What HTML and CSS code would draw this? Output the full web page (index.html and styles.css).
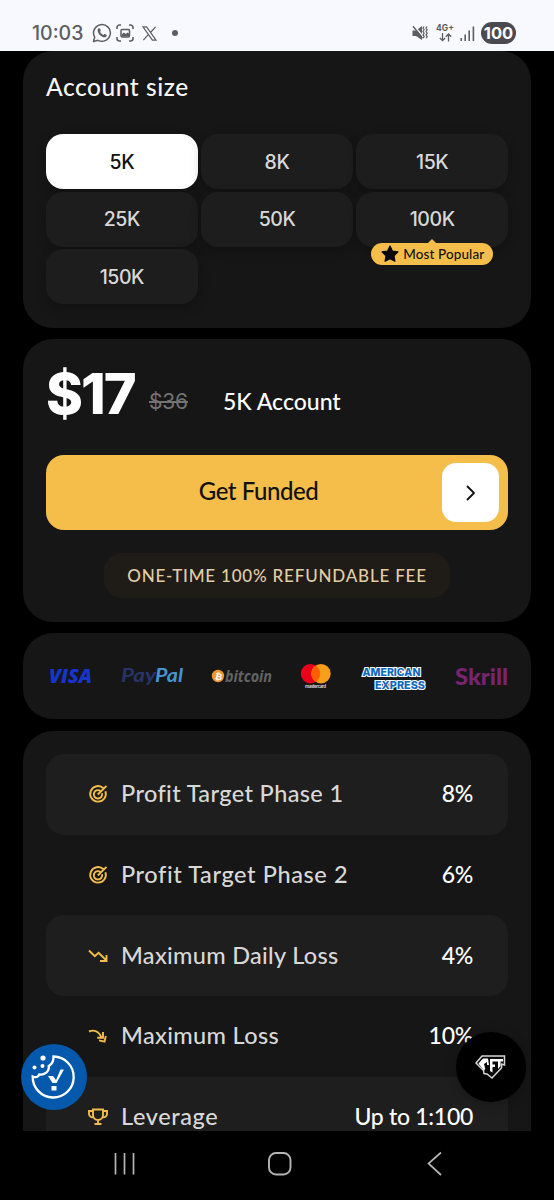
FILE: index.html
```
<!DOCTYPE html>
<html lang="en">
<head>
<meta charset="utf-8">
<title>Account size</title>
<link rel="stylesheet" href="styles.css">
</head>
<body>
<div class="screen">
  <header class="status">
    <div class="status-left">
      <span class="clock">10:03</span>
      <svg class="whatsapp" width="20" height="20" viewBox="0 0 20 20"><path d="M1.500 18.500l1.200-4.400A8.400 8.400 0 1 1 6 17.300z" fill="none" stroke="#5d5d63" stroke-width="1.500" stroke-linejoin="round"/><path d="M6.300 5.600c.7-.7 1.400-.6 1.800.2l.7 1.600c.1.4-.6 1.100-.8 1.400.8 1.500 1.800 2.400 3.300 3.100.4-.3 1-1.100 1.400-1l1.800.9c.5.3.3 1.600-.5 2.100-1.500 1-4.200-.1-5.900-1.700-1.800-1.700-3.300-4.600-1.800-6.600z" fill="#5d5d63"/></svg>
      <svg class="capture" width="18" height="18" viewBox="0 0 18 18"><path d="M1 5V3.500A2.500 2.500 0 0 1 3.500 1H5M13 1h1.500A2.500 2.500 0 0 1 17 3.500V5M17 13v1.500a2.500 2.500 0 0 1-2.500 2.500H13M5 17H3.500A2.500 2.500 0 0 1 1 14.500V13" fill="none" stroke="#5d5d63" stroke-width="1.600"/><rect x="5" y="5.500" width="8.500" height="7.500" rx="1.200" fill="none" stroke="#5d5d63" stroke-width="1.500"/><path d="M5.500 12.500V10.500l2.500-2 1.800 1.400 1.600-1.400 2 1.600v2.400z" fill="#5d5d63"/></svg>
      <svg class="xlogo" width="15" height="15" viewBox="0 0 15 15"><path d="M1 .8h3.600l9.400 13.400h-3.600zM13.600.8L8.500 6.500M1.300 14.200l5.200-5.900" fill="none" stroke="#5d5d63" stroke-width="1.200"/></svg>
      <span class="more-dot"></span>
    </div>
    <div class="status-right">
      <svg width="16" height="16" viewBox="0 0 16 16"><path d="M.5 5.500h3.500L10 1v14L4 11H.5z" fill="#5d5d63"/><path d="M1.800 .3l9 11" stroke="#f8f8ff" stroke-width="1.500"/><path d="M1 1.200l9.500 12" stroke="#5d5d63" stroke-width="1.400"/><path d="M12 1.500l-1 1.600 1.200 1.700-1.200 1.700 1.200 1.700-1.200 1.700 1.200 1.700-1 1.600M15 1.500l-1 1.600 1.200 1.700-1.200 1.700 1.200 1.700-1.200 1.700 1.200 1.700-1 1.600" fill="none" stroke="#5d5d63" stroke-width="1.200"/></svg>
      <div class="network"><span>4G+</span><svg width="13" height="9" viewBox="0 0 13 9"><path d="M3.500 0v7.500M.8 5l2.700 2.700L6.200 5M9.500 8.500V1M6.800 3.700L9.500 1l2.700 2.700" fill="none" stroke="#5d5d63" stroke-width="1.300"/></svg></div>
      <svg class="signal" width="15" height="15" viewBox="0 0 15 15"><path d="M1.200 12v3M5.200 8.500V15M9.200 4.500V15M13.400 .5V15" stroke="#5d5d63" stroke-width="1.600"/></svg>
      <span class="battery">100</span>
    </div>
  </header>

  <main class="content">
    <section class="panel sizes">
      <h1 class="title">Account size</h1>
      <div class="size-grid">
        <button class="size active">5K</button>
        <button class="size">8K</button>
        <button class="size">15K</button>
        <button class="size">25K</button>
        <button class="size">50K</button>
        <div class="size popular">100K
          <span class="badge"><svg width="18" height="18" viewBox="0 0 18 18"><path d="M9 1l2.400 5 5.600.8-4 3.900.9 5.600L9 13.700l-4.900 2.600.9-5.600-4-3.900 5.600-.8z" fill="#080808" stroke="#080808" stroke-width="1.200" stroke-linejoin="round"/></svg><span class="badge-text">Most Popular</span></span>
        </div>
        <button class="size">150K</button>
      </div>
    </section>

    <section class="panel checkout">
      <div class="pricing"><span class="price">$17</span><span class="old-price">$36</span><span class="plan">5K Account</span></div>
      <button class="cta"><span class="cta-label">Get Funded</span><span class="cta-arrow"><svg width="12" height="18" viewBox="0 0 12 18"><path d="M2.500 2.500L9 9l-6.500 6.500" fill="none" stroke="#111" stroke-width="1.800" stroke-linecap="round" stroke-linejoin="round"/></svg></span></button>
      <div class="fee"><span>ONE-TIME 100% REFUNDABLE FEE</span></div>
    </section>

    <section class="panel payments">
      <svg width="508" height="86" viewBox="0 0 508 86">
        <text class="visa" x="26" y="50" textLength="43" lengthAdjust="spacingAndGlyphs">VISA</text>
        <text class="paypal" x="98" y="48.500" fill="#27346a" textLength="35" lengthAdjust="spacingAndGlyphs">Pay</text>
        <text class="paypal" x="132" y="48.500" fill="#4694cd" textLength="28" lengthAdjust="spacingAndGlyphs">Pal</text>
        <circle cx="195" cy="43" r="6.200" fill="#f29530"/>
        <text class="coin" x="192" y="46.500" transform="rotate(10 195 43)">₿</text>
        <text class="bitcoin" x="202" y="49" textLength="47" lengthAdjust="spacingAndGlyphs">bitcoin</text>
        <circle cx="287.500" cy="40.700" r="9.700" fill="#eb001b"/><circle cx="298" cy="40.700" r="9.700" fill="#f79e1b"/><path d="M292.750 32.550a9.700 9.700 0 0 1 0 16.300a9.700 9.700 0 0 1 0-16.300" fill="#ff5f00"/>
        <text class="mastercard" x="282" y="55" textLength="21">mastercard</text>
        <g class="amex"><text x="339.500" y="42.500" textLength="58" lengthAdjust="spacingAndGlyphs">AMERICAN</text><text x="352" y="55.500" textLength="50" lengthAdjust="spacingAndGlyphs">EXPRESS</text></g>
        <text class="skrill" x="432" y="51.500" textLength="53" lengthAdjust="spacingAndGlyphs">Skrill</text>
      </svg>
    </section>

    <section class="panel rules">
      <div class="rule shaded"><svg width="20" height="20" viewBox="0 0 20 20"><path d="M15.500 4.300A7.800 7.800 0 1 0 17.400 7.300M12.200 6.800A4.200 4.200 0 1 0 14 9.200M9.800 10.500L18.500 1.800" class="stroke"/></svg><span class="label l1">Profit Target Phase 1</span><span class="value">8%</span></div>
      <div class="rule"><svg width="20" height="20" viewBox="0 0 20 20"><path d="M15.500 4.300A7.800 7.800 0 1 0 17.400 7.300M12.200 6.800A4.200 4.200 0 1 0 14 9.200M9.800 10.500L18.500 1.800" class="stroke"/></svg><span class="label l2">Profit Target Phase 2</span><span class="value">6%</span></div>
      <div class="rule shaded"><svg width="20" height="20" viewBox="0 0 20 20"><path d="M1 4.500l5.800 5.700 3.800-3.500 7.900 7.800M18.500 9v6h-6.500" class="stroke"/></svg><span class="label l3">Maximum Daily Loss</span><span class="value">4%</span></div>
      <div class="rule"><svg width="20" height="20" viewBox="0 0 20 20"><path d="M1 5.500c5-2 9.500-.5 12.500 6M15 6v5.800H9.200M17.800 10l-1.300 5.700-5.500-1.300" class="stroke"/></svg><span class="label l4">Maximum Loss</span><span class="value">10%</span></div>
      <div class="rule shaded"><svg width="20" height="20" viewBox="0 0 20 20"><path d="M5 2.500h10V8a5 5 0 0 1-10 0zM5 4H1v3a3.500 3.500 0 0 0 4 3.200M15 4h4v3a3.500 3.500 0 0 1-4 3.200M10 13v4M6.500 17h7" class="stroke"/></svg><span class="label l5">Leverage</span><span class="value">Up to 1:100</span></div>
    </section>

    <button class="float cookie"><svg width="66" height="66" viewBox="0 0 66 66"><path d="M32.500 12.500a20.500 20.500 0 1 1-20.800 20c3 1.500 5.500.5 6.500-2 5 1 10.500-3 9.500-8.500 3.500-2 5-5 4.800-9.500z" fill="none" stroke="#fff" stroke-width="2.300"/><circle cx="22" cy="14" r="2.600" fill="#fff"/><circle cx="13.500" cy="23.500" r="2" fill="#fff"/><circle cx="21.500" cy="22" r="2" fill="#fff"/><path d="M27 32h5l3 4 4.500-10.500H43L35.500 39h-4zM30.500 42h5v4.500h-5z" fill="#fff"/></svg></button>
    <button class="float chat"><svg width="70" height="70" viewBox="0 0 70 70"><path d="M20 31l6-7h22.500v9l-3-1v4L36 46l-5-4-3-.5-.5-3z" fill="#090909" stroke="#d5d5d5" stroke-width="1.500"/><path d="M32 26.500h-5L22.500 31.500l5.500 7 1.300-1.500-1.300-5 3-2v3h2zM34 27h6v2.500h-3.500v3H39V35h-2.500v5.500L34 39zM40 27h7v2.500h-2.500V34L42 37v-7.500h-2z" fill="#fff"/></svg></button>
  </main>

  <nav class="navbar">
    <svg width="554" height="69" viewBox="0 0 554 69"><path d="M115.500 22v21.500M124.500 22v21.500M133.500 22v21.500M441 21.500L428.500 32.500 441 44" fill="none" stroke="#b5b5b5" stroke-width="1.700"/><rect x="269" y="22" width="21.500" height="21.500" rx="7" fill="none" stroke="#b5b5b5" stroke-width="1.900"/></svg>
  </nav>
</div>
</body>
</html>
```
FILE: styles.css
```
* { box-sizing: border-box; }
body { margin: 0; background: #000; font-family: Lato, sans-serif; }
button { border: 0; padding: 0; font: inherit; }
svg { display: block; flex: none; }
.screen { width: 554px; height: 1200px; display: flex; flex-direction: column; overflow: hidden; background: #000; }
.status { height: 51px; flex: none; background: #f8f8ff; display: flex; justify-content: space-between; padding: 22px 38px 7px 32px; color: #5d5d63; }
.status-left, .status-right { display: flex; align-items: center; height: 22px; }
.clock { font: 500 19.500px/22px Inter, sans-serif; width: 60px; white-space: nowrap; }
.capture { margin-left: 4px; }
.xlogo { margin-left: 8px; }
.more-dot { width: 6px; height: 6px; border-radius: 50%; background: #5d5d63; margin-left: 15px; }
.network { width: 18px; margin-left: 8px; display: flex; flex-direction: column; align-items: center; font: 700 8.500px/9px Inter, sans-serif; }
.signal { margin-left: 6px; }
.battery { width: 35px; height: 22px; margin-left: 6px; border-radius: 11px; background: #4a4a50; color: #fff; font: 700 16.500px/22px Inter, sans-serif; text-align: center; }
.content { position: relative; flex: none; height: 1080px; overflow: hidden; padding: 0 23px; display: flex; flex-direction: column; }
.panel { flex: none; background: #161616; border-radius: 30px; }
.sizes { height: 277px; padding: 19px 23px; }
.title { margin: 0; height: 64px; font-size: 24.500px; line-height: 33px; font-weight: 500; letter-spacing: .55px; color: #f5f5f5; }
.size-grid { display: grid; grid-template-columns: repeat(3, 1fr); grid-auto-rows: 55px; gap: 2.700px 3.500px; }
.size { position: relative; border-radius: 17px; background: #1d1d1d; color: #d8d8d8; box-shadow: 0 4px 12px rgba(0, 0, 0, .23); display: flex; align-items: center; justify-content: center; font: 500 19.500px/24px Inter, sans-serif; letter-spacing: -.45px; }
.size.active { background: #fff; color: #111; }
.badge { position: absolute; top: 51px; left: 15px; width: 122px; height: 22px; border-radius: 11px; background: #f5be4b; color: #111; display: flex; align-items: center; padding-left: 10px; gap: 4px; font: 500 13.500px/22px Lato, sans-serif; letter-spacing: .1px; white-space: nowrap; }
.badge::before { content: ""; position: absolute; top: -4px; left: 56px; border: 5px solid transparent; border-top: 0; border-bottom-color: #f5be4b; }
.checkout { height: 283px; margin-top: 11px; padding: 23px; }
.pricing { height: 93px; display: flex; align-items: flex-start; color: #fff; white-space: nowrap; }
.price { width: 103px; font: 800 56px/64px Inter, sans-serif; letter-spacing: -2px; }
.old-price { width: 74px; margin-top: 25px; font: 400 21px/30px Inter, sans-serif; color: #737373; text-decoration: line-through; letter-spacing: -.2px; }
.plan { margin-top: 24px; font-size: 23px; line-height: 30px; font-weight: 500; }
.cta { display: flex; width: 100%; height: 75px; border-radius: 18px; background: #f5be4b; align-items: center; padding: 0 9px 0 29px; color: #111; }
.cta-label { flex: 1; font-size: 24px; line-height: 30px; padding-bottom: 3px; font-weight: 500; letter-spacing: -.45px; text-align: center; }
.cta-arrow { width: 57px; height: 59px; border-radius: 14px; background: #fff; display: grid; place-items: center; }
.fee { width: 346px; height: 45px; margin: 23px auto 0; padding-bottom: 1px; border-radius: 18px; background: #1f1b16; color: #e0cda6; display: grid; place-items: center; font-size: 17px; font-weight: 500; letter-spacing: .8px; white-space: nowrap; }
.payments { height: 86px; margin-top: 11px; }
.visa { font: italic 800 20px "Open Sans", sans-serif; fill: #1834cf; }
.paypal { font: italic 700 19px Lato, sans-serif; }
.coin { font: 700 9px "DejaVu Sans", sans-serif; fill: #fff; }
.bitcoin { font: italic 700 15.500px "Open Sans", sans-serif; fill: #636363; }
.mastercard { font: 700 5px Lato, sans-serif; fill: #ddd; }
.amex { font: 800 10.500px Inter, sans-serif; fill: #1268bd; stroke: #fff; stroke-width: 2.200px; paint-order: stroke; }
.skrill { font: 900 23px Lato, sans-serif; fill: #79246f; }
.rules { height: 427px; margin-top: 12px; padding: 23px 23px 0; }
.rule { height: 80.700px; flex: none; border-radius: 18px; display: flex; align-items: center; padding: 0 35px 0 42px; color: #d8d8d8; white-space: nowrap; }
.shaded { background: #1e1e1e; }
.label { margin-left: 13px; padding-bottom: 2px; font-size: 23.500px; line-height: 30px; font-weight: 500; }
.l1 { letter-spacing: .38px; }
.l2 { letter-spacing: .6px; }
.l3 { letter-spacing: .3px; }
.l4 { letter-spacing: .35px; }
.l5 { letter-spacing: .6px; }
.value { margin-left: auto; padding-bottom: 2px; color: #fff; font-size: 23px; line-height: 30px; font-weight: 500; letter-spacing: -.28px; }
.stroke { fill: none; stroke: #f3bd4b; stroke-width: 1.900; }
.float { position: absolute; border-radius: 50%; overflow: hidden; }
.cookie { left: 21px; top: 993px; width: 66px; height: 66px; background: #0559ad; }
.chat { left: 456px; top: 981px; width: 70px; height: 70px; background: #000; box-shadow: 0 2px 12px rgba(0, 0, 0, .25); }
.navbar { height: 69px; }
```
